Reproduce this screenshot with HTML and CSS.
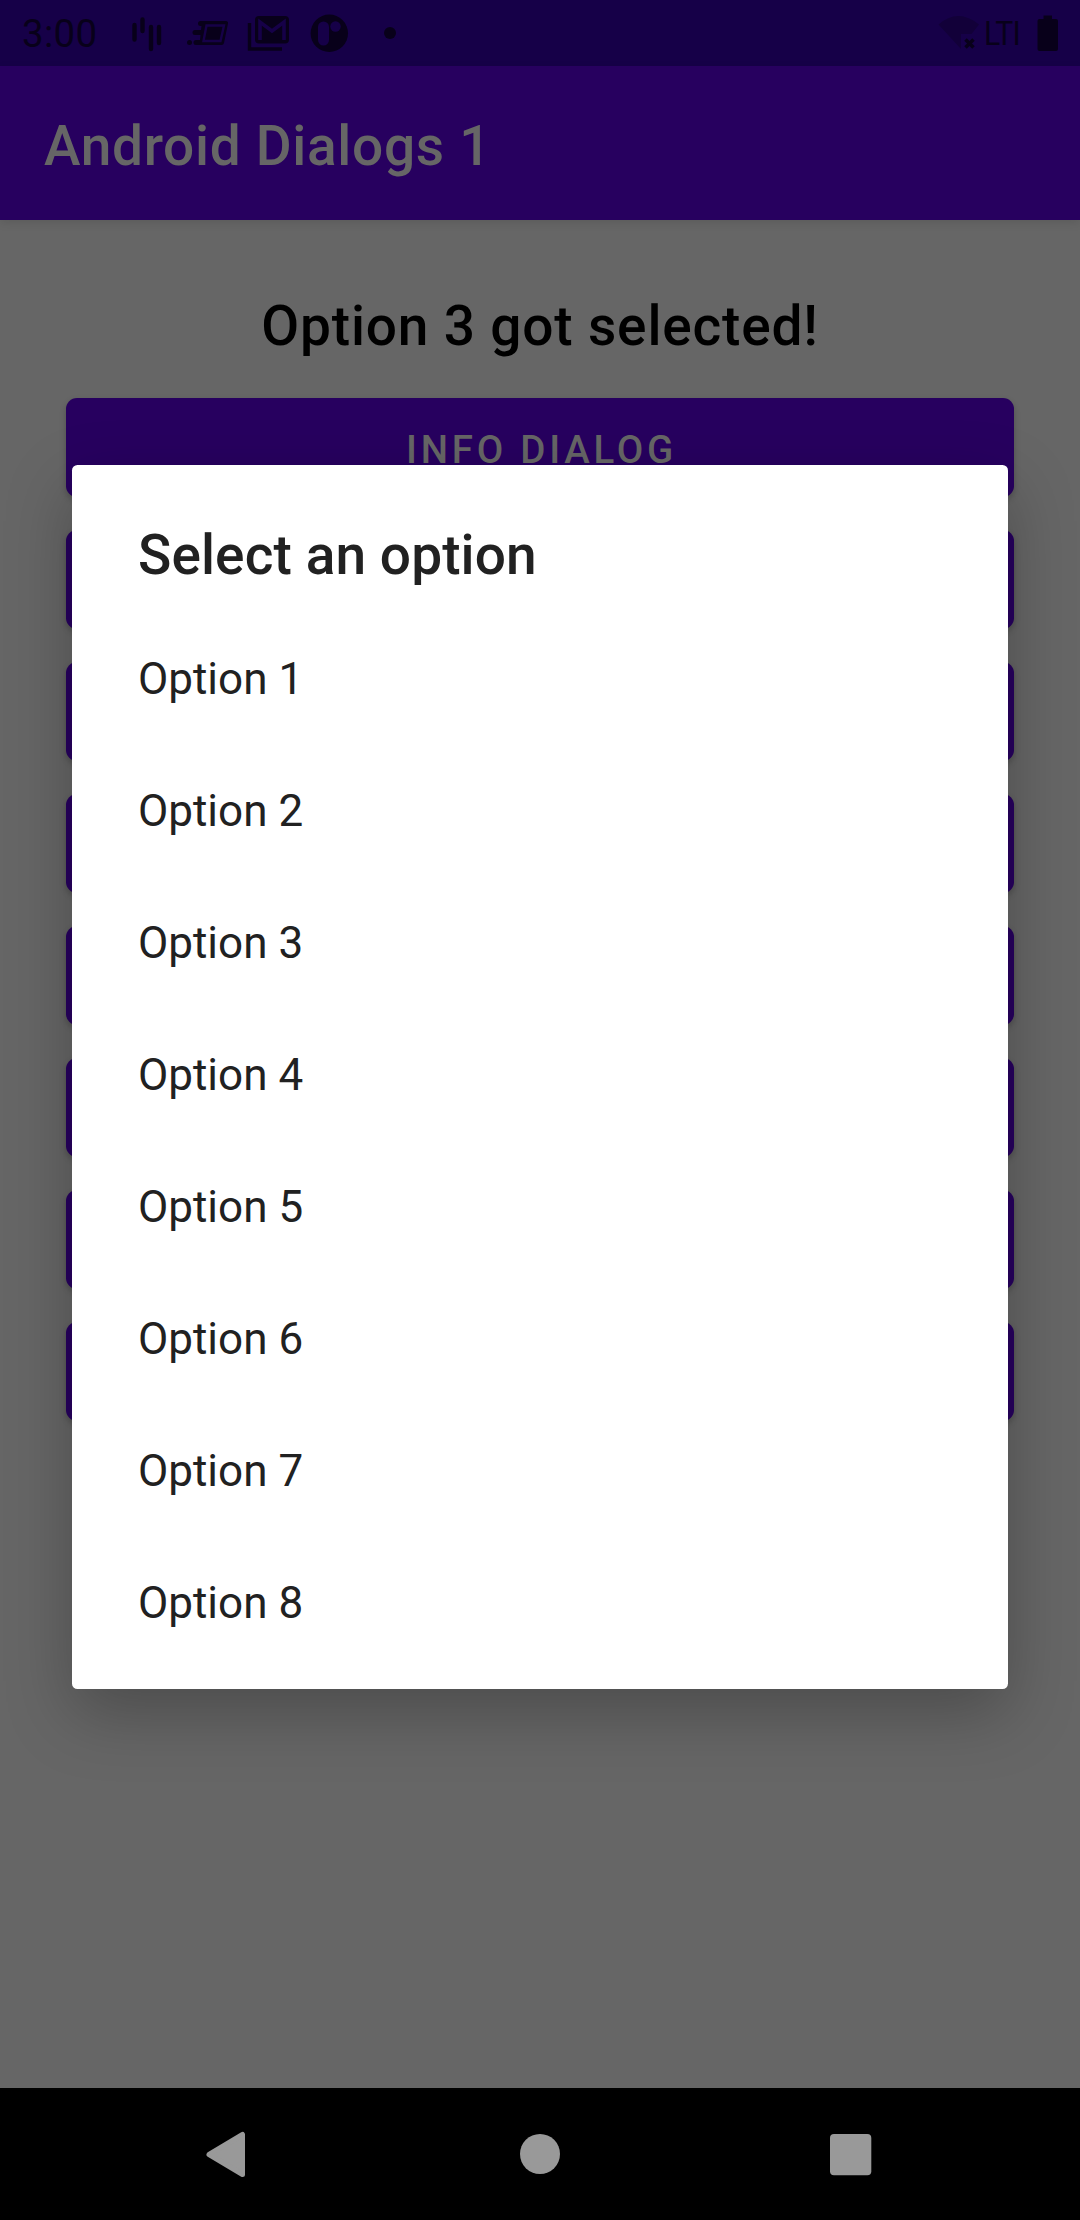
FILE: index.html
```html
<!DOCTYPE html>
<html lang="en">
<head>
<meta charset="utf-8">
<title>Android Dialogs 1</title>
<link rel="stylesheet" href="styles.css">
</head>
<body>
<div class="screen">
  <header class="status-bar">
    <span class="clock">3:00</span>
    <svg class="status-icons" width="300" height="66" viewBox="120 0 300 66">
      <g class="bars">
        <path d="M134.5 25v14.500M142.500 19.500v11.500M151 27v22M159 27v16"/>
      </g>
      <path d="M200.500 21H226a2 2 0 0 1 2 2.500L224 43a2.500 2.500 0 0 1-2.500 2H196a2.300 2.300 0 0 1 0-5h4l.500-5H195a2.300 2.300 0 0 1 0-5h6l.500-4h-1a2.300 2.300 0 0 1 0-5z"/>
      <circle cx="189.500" cy="42.500" r="2.500"/>
      <path class="cut-line" d="M206.500 25.500H224l-3.500 15.500H203.500z"/>
      <rect x="255" y="16" width="34" height="27.500" rx="4"/>
      <path class="cut-line wide" d="M260 40V22l12 9 12-9v18"/>
      <path class="outline" d="M249.500 23v26H282"/>
      <circle cx="329.300" cy="33.300" r="18.700"/>
      <rect class="cut" x="318" y="21.500" width="11" height="24" rx="5.500"/>
      <circle class="cut" cx="335.500" cy="26.500" r="5.200"/>
      <circle cx="390" cy="33" r="6"/>
    </svg>
    <div class="status-end">
      <svg width="44" height="66" viewBox="937 0 44 66">
        <path class="faint" d="M938.500 24.500Q958 7.500 979 24.500L971.500 34H961v15z"/>
        <path class="cross" d="M965.500 39.500l8 8M973.500 39.500l-8 8"/>
      </svg>
      <span class="network">LTI</span>
      <svg class="battery" width="22" height="66" viewBox="0 0 22 66">
        <path d="M6.500 15.500h8.500V19h4a2 2 0 0 1 2 2v28a2 2 0 0 1-2 2H2.500a2 2 0 0 1-2-2V21a2 2 0 0 1 2-2h4z"/>
      </svg>
    </div>
  </header>
  <div class="app-bar"><h1 class="app-title">Android Dialogs 1</h1></div>
  <main class="content">
    <p class="message">Option 3 got selected!</p>
    <div class="buttons">
      <button class="button">INFO DIALOG</button>
      <button class="button"></button>
      <button class="button"></button>
      <button class="button"></button>
      <button class="button"></button>
      <button class="button"></button>
      <button class="button"></button>
      <button class="button"></button>
    </div>
  </main>
  <nav class="nav-bar">
    <svg width="1080" height="132" viewBox="0 0 1080 132">
      <path class="back" d="M209 66.500L242.500 46.500v40z"/>
      <circle cx="540" cy="66" r="20"/>
      <rect x="830" y="46" width="41.300" height="41.300" rx="4"/>
    </svg>
  </nav>
  <section class="dialog" role="dialog">
    <h2 class="dialog-title">Select an option</h2>
    <ul class="options">
      <li>Option 1</li>
      <li>Option 2</li>
      <li>Option 3</li>
      <li>Option 4</li>
      <li>Option 5</li>
      <li>Option 6</li>
      <li>Option 7</li>
      <li>Option 8</li>
    </ul>
  </section>
</div>
</body>
</html>
```
FILE: styles.css
```css
* { box-sizing: border-box; }

body {
  margin: 0;
  font-family: Roboto, "Liberation Sans", sans-serif;
}

.screen {
  position: relative;
  width: 1080px;
  height: 2220px;
  display: flex;
  flex-direction: column;
  overflow: hidden;
  background: #666;
}

svg { display: block; }

.status-bar {
  height: 66px;
  flex: none;
  display: flex;
  align-items: center;
  padding-left: 22px;
  background: #160048;
  color: #08001a;
  fill: #08001a;
}

.clock {
  width: 98px;
  font-size: 38.5px;
  line-height: 66px;
  letter-spacing: .3px;
  padding-top: 2px;
}

.bars { fill: none; stroke: #08001a; stroke-width: 4.4; stroke-linecap: round; }
.outline { fill: none; stroke: #08001a; stroke-width: 3.4; }
.cut { fill: #160048; }
.cut-line { fill: none; stroke: #160048; stroke-width: 2.4; }
.wide { stroke-width: 3.6; }
.faint { fill: #120039; }
.cross { fill: none; stroke: #08001a; stroke-width: 3.5; }

.status-end { display: flex; align-items: center; margin-left: auto; padding-right: 21px; }

.network {
  width: 56px;
  padding-left: 3px;
  font-size: 34px;
  line-height: 66px;
  letter-spacing: -1px;
  transform: scaleX(.89);
  transform-origin: 3px 50%;
}

.app-bar {
  height: 154px;
  flex: none;
  display: flex;
  align-items: center;
  padding: 6px 0 0 44px;
  background: #27005f;
  color: #666;
  box-shadow: 0 3px 9px rgba(0, 0, 0, .1);
}

.app-title, .dialog-title, .message {
  margin: 0;
  font-size: 55px;
  line-height: 64px;
  font-weight: 500;
}

.app-title { letter-spacing: .0125em; }
.dialog-title { letter-spacing: .1px; }

.content { flex: 1; padding: 74px 66px 0; }
.message { text-align: center; color: #000; letter-spacing: .015em; }
.buttons { display: flex; flex-direction: column; gap: 33px; margin-top: 40px; }

.button {
  height: 99px;
  border: 0;
  padding: 4px 0 0 3px;
  border-radius: 11px;
  background: #27005f;
  color: #666;
  font: 500 38.5px/45px Roboto, "Liberation Sans", sans-serif;
  letter-spacing: 3.75px;
  box-shadow: 0 3px 6px rgba(0, 0, 0, .22);
}

.nav-bar { height: 132px; flex: none; background: #000; fill: #999; }
.back { stroke: #999; stroke-width: 5; stroke-linejoin: round; }

.dialog {
  position: absolute;
  left: 72px;
  top: 465px;
  width: 936px;
  height: 1224px;
  padding: 58px 66px 0;
  border-radius: 5.5px;
  background: #fff;
  color: #212121;
  box-shadow: 0 24px 66px rgba(0, 0, 0, .26);
}

.options { list-style: none; margin: 26px 0 0; padding: 0; font-size: 44px; }
.options li { height: 132px; line-height: 132px; }
```
